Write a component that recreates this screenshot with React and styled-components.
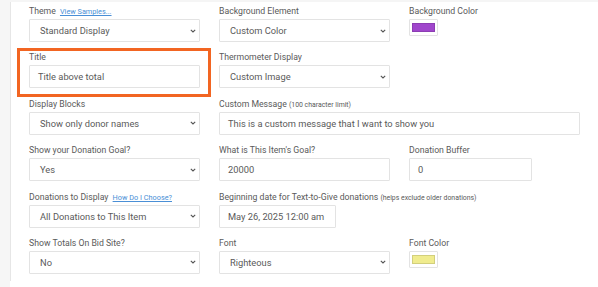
import React from "react";
import styled, { createGlobalStyle } from "styled-components";

const Global = createGlobalStyle`
  html, body { margin: 0; padding: 0; background: #fff; }
  body { font-family: Roboto, "Liberation Sans", sans-serif; }
  #root { min-height: 287px; }
`;

const Page = styled.div`
  display: flex;
  background: linear-gradient(#f5f5f5, #f5f5f5) 0 0 / 100% 2px no-repeat, #fff;
  padding-top: 2px;
  height: 285px;
`;

const Gutter = styled.div`
  width: 10px;
  flex: none;
  background: #f6f6f6;
  margin-top: -2px;
`;

const Panel = styled.div`
  flex: 1;
  background: #fff;
  border-left: 1px solid #e6e6e6;
  padding: 2px 0 0 18px;
  height: 279px;
  box-sizing: border-box;
`;

const Grid = styled.div`
  display: grid;
  grid-template-columns: 171px 171px 171px;
  column-gap: 19px;
  row-gap: 8.4px;
`;

const Field = styled.div`
  position: relative;
  display: flex;
  flex-direction: column;
  grid-column: ${(p) => p.$span || "auto"};
`;

const Label = styled.div`
  font-size: 8.7px;
  line-height: 14px;
  height: 14px;
  margin-bottom: 1px;
  color: #5a5a5a;
  white-space: nowrap;
`;

const Small = styled.span`
  font-size: 6.9px;
  color: #5a5a5a;
`;

const Link = styled.a`
  font-size: 7.3px;
  color: #4a8fd6;
  text-decoration: underline;
  margin-left: 2px;
`;

const boxBase = `
  box-sizing: border-box;
  height: 23px;
  border: 1px solid #e3e3e3;
  border-radius: 1px;
  background: #fff;
  color: #5a5a5a;
  font-size: 9.3px;
  display: flex;
  align-items: center;
  white-space: nowrap;
`;

const Input = styled.div`
  ${boxBase}
  padding-left: 8px;
  width: ${(p) => p.$w || "100%"};
`;

const Select = styled.div`
  ${boxBase}
  padding: 0 3px 0 10px;
  justify-content: space-between;
  width: ${(p) => p.$w || "100%"};
`;

const Swatch = styled.div`
  box-sizing: border-box;
  width: 29px;
  height: 17px;
  border: 1px solid #e3e3e3;
  border-radius: 1px;
  padding: 3px 2px 3px 2px;
  background: #fff;
`;

const SwatchFill = styled.div`
  width: 100%;
  height: 100%;
  background: ${(p) => p.$c};
  border: 1px solid rgba(0,0,0,0.12);
  box-sizing: border-box;
`;

const Highlight = styled.div`
  position: absolute;
  left: -12px;
  right: -11px;
  top: -2px;
  bottom: -9px;
  border: 3px solid #f26522;
  pointer-events: none;
`;

const Chevron = () => (
  <svg width="6" height="4" viewBox="0 0 6 4" aria-hidden="true">
    <path d="M0.8 0.8 L3 3 L5.2 0.8" fill="none" stroke="#555" strokeWidth="1.1" />
  </svg>
);

const SelectBox = ({ children, w }) => (
  <Select $w={w}>
    <span>{children}</span>
    <Chevron />
  </Select>
);

export default function App() {
  return (
    <>
      <Global />
      <Page>
        <Gutter />
        <Panel>
          <Grid>
            <Field>
              <Label>
                Theme <Link>View Samples...</Link>
              </Label>
              <SelectBox>Standard Display</SelectBox>
            </Field>
            <Field>
              <Label>Background Element</Label>
              <SelectBox>Custom Color</SelectBox>
            </Field>
            <Field>
              <Label>Background Color</Label>
              <Swatch>
                <SwatchFill $c="#a046cc" />
              </Swatch>
            </Field>

            <Field>
              <Highlight />
              <Label>Title</Label>
              <Input>Title above total</Input>
            </Field>
            <Field $span="span 2">
              <Label>Thermometer Display</Label>
              <SelectBox w="171px">Custom Image</SelectBox>
            </Field>

            <Field>
              <Label>Display Blocks</Label>
              <SelectBox>Show only donor names</SelectBox>
            </Field>
            <Field $span="span 2">
              <Label>
                Custom Message <Small>(100 character limit)</Small>
              </Label>
              <Input>This is a custom message that I want to show you</Input>
            </Field>

            <Field>
              <Label>Show your Donation Goal?</Label>
              <SelectBox>Yes</SelectBox>
            </Field>
            <Field>
              <Label>What is This Item's Goal?</Label>
              <Input>20000</Input>
            </Field>
            <Field>
              <Label>Donation Buffer</Label>
              <Input $w="123px">0</Input>
            </Field>

            <Field>
              <Label>
                Donations to Display <Link>How Do I Choose?</Link>
              </Label>
              <SelectBox>All Donations to This Item</SelectBox>
            </Field>
            <Field $span="span 2">
              <Label>
                Beginning date for Text-to-Give donations{" "}
                <Small>(helps exclude older donations)</Small>
              </Label>
              <Input $w="117px">May 26, 2025 12:00 am</Input>
            </Field>

            <Field>
              <Label>Show Totals On Bid Site?</Label>
              <SelectBox>No</SelectBox>
            </Field>
            <Field>
              <Label>Font</Label>
              <SelectBox>Righteous</SelectBox>
            </Field>
            <Field>
              <Label>Font Color</Label>
              <Swatch>
                <SwatchFill $c="#f0ec8e" />
              </Swatch>
            </Field>
          </Grid>
        </Panel>
      </Page>
    </>
  );
}
